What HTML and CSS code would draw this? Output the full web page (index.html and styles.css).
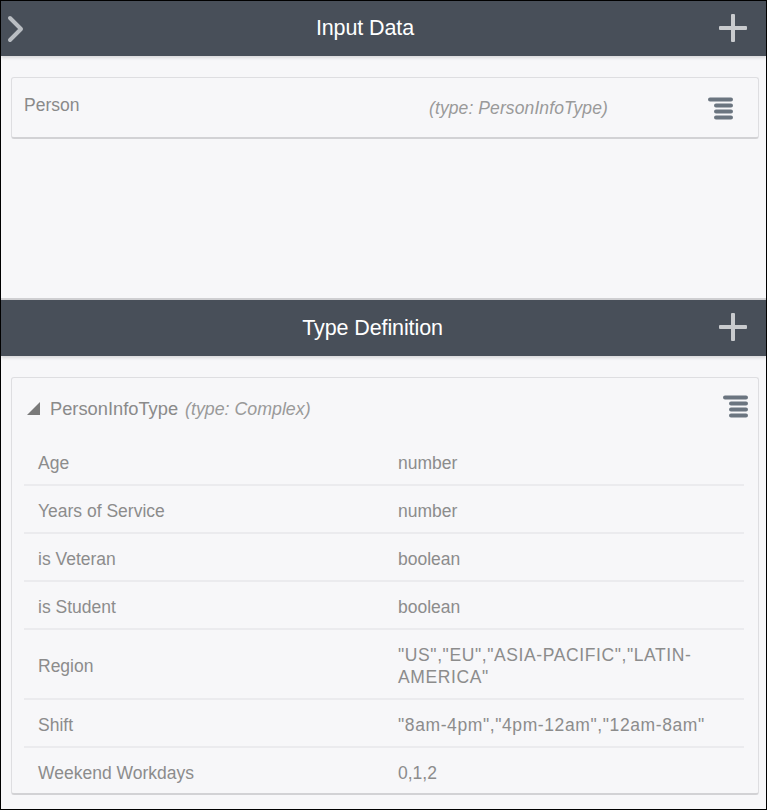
FILE: index.html
```html
<!DOCTYPE html>
<html>
<head>
<meta charset="utf-8">
<link rel="stylesheet" href="styles.css">
</head>
<body>
<div class="frame">
  <section class="panel panel-input">
    <header class="panel-header">
      <svg class="chevron" width="18" height="28" viewBox="0 0 18 28"><polyline points="3,3 14,14 3,25" fill="none" stroke="#b9bdc2" stroke-width="4" stroke-linecap="round" stroke-linejoin="round"/></svg>
      <span class="panel-title">Input Data</span>
      <svg class="plus" width="28" height="28" viewBox="0 0 28 28"><rect x="12" y="0" width="4" height="28" rx="1" fill="#c9cbce"/><rect x="0" y="12" width="28" height="4" rx="1" fill="#c9cbce"/></svg>
    </header>
    <div class="panel-body">
      <div class="card input-card">
        <span class="input-name">Person</span>
        <span class="input-type">(type: PersonInfoType)</span>
        <svg class="menu-icon" width="25" height="23" viewBox="0 0 25 23"><rect x="0" y="0.5" width="25" height="4" rx="2" fill="#6b7580"/><rect x="6" y="6.5" width="19" height="4" rx="2" fill="#6b7580"/><rect x="6" y="12.5" width="19" height="4" rx="2" fill="#6b7580"/><rect x="6" y="18.5" width="19" height="4" rx="2" fill="#6b7580"/></svg>
      </div>
    </div>
  </section>
  <section class="panel panel-types">
    <header class="panel-header">
      <span class="panel-title">Type Definition</span>
      <svg class="plus" width="28" height="28" viewBox="0 0 28 28"><rect x="12" y="0" width="4" height="28" rx="1" fill="#c9cbce"/><rect x="0" y="12" width="28" height="4" rx="1" fill="#c9cbce"/></svg>
    </header>
    <div class="panel-body types-body">
      <div class="card type-card">
        <div class="type-head">
          <svg class="triangle" width="13" height="13" viewBox="0 0 13 13"><polygon points="0,13 13,0 13,13" fill="#7a7a7a"/></svg>
          <span class="type-name">PersonInfoType</span>
          <span class="type-kind">(type: Complex)</span>
          <svg class="menu-icon menu-icon-2" width="25" height="23" viewBox="0 0 25 23"><rect x="0" y="0.5" width="25" height="4" rx="2" fill="#6b7580"/><rect x="6" y="6.5" width="19" height="4" rx="2" fill="#6b7580"/><rect x="6" y="12.5" width="19" height="4" rx="2" fill="#6b7580"/><rect x="6" y="18.5" width="19" height="4" rx="2" fill="#6b7580"/></svg>
        </div>
        <div class="fields">
          <div class="field"><span class="field-name">Age</span><span class="field-value">number</span></div>
          <div class="field"><span class="field-name">Years of Service</span><span class="field-value">number</span></div>
          <div class="field"><span class="field-name">is Veteran</span><span class="field-value">boolean</span></div>
          <div class="field"><span class="field-name">is Student</span><span class="field-value">boolean</span></div>
          <div class="field"><span class="field-name">Region</span><span class="field-value enum">"US","EU","ASIA-PACIFIC","LATIN-AMERICA"</span></div>
          <div class="field"><span class="field-name">Shift</span><span class="field-value enum">"8am-4pm","4pm-12am","12am-8am"</span></div>
          <div class="field last"><span class="field-name">Weekend Workdays</span><span class="field-value">0,1,2</span></div>
        </div>
      </div>
    </div>
  </section>
</div>
</body>
</html>
```

FILE: styles.css
```css
html, body {
  margin: 0;
  padding: 0;
}
body {
  font-family: "Liberation Sans", Arial, sans-serif;
  background: #f7f7f9;
}
.frame {
  width: 767px;
  height: 810px;
  box-sizing: border-box;
  border: 1px solid #000;
  background: #f7f7f9;
  display: flex;
  flex-direction: column;
  overflow: hidden;
}
.panel-header {
  position: relative;
  height: 55px;
  background: #484f59;
  display: flex;
  align-items: center;
  justify-content: center;
  box-shadow: 0 2px 3px rgba(0, 0, 0, 0.12);
  z-index: 1;
  padding-right: 37px;
}
.panel-types .panel-header {
  height: 56px;
  padding-right: 22px;
}
.panel-title {
  color: #ffffff;
  font-size: 21.5px;
  letter-spacing: -0.1px;
}
.chevron {
  position: absolute;
  left: 6px;
  top: 14px;
}
.plus {
  position: absolute;
  right: 19px;
  top: 13px;
}
.panel-body {
  height: 244px;
  box-sizing: border-box;
  padding: 21px 7px 0 10px;
  border-bottom: 2px solid #cfcfd2;
}
.card {
  background: #f7f7f9;
  border: 1px solid #dedee1;
  border-bottom: 2px solid #d2d2d5;
  border-radius: 3px;
  box-sizing: border-box;
}
.input-card {
  height: 62px;
  display: flex;
  align-items: flex-start;
  padding: 16px 25px 0 12px;
  font-size: 17.5px;
  line-height: 22px;
}
.input-name {
  color: #8a8a8a;
  width: 405px;
}
.input-type {
  color: #9a9a9a;
  font-style: italic;
  margin-top: 3px;
  letter-spacing: 0.1px;
}
.input-card .menu-icon {
  margin-left: auto;
  margin-top: 3px;
}
.types-body {
  height: auto;
  border-bottom: none;
  padding-top: 21px;
}
.type-card {
  height: 418px;
}
.type-head {
  display: flex;
  align-items: center;
  height: 60px;
  box-sizing: border-box;
  padding: 1px 10px 0 15px;
  font-size: 18.3px;
  line-height: 22px;
}
.triangle {
  margin-right: 10px;
}
.type-name {
  color: #8a8a8a;
}
.type-kind {
  color: #9a9a9a;
  font-style: italic;
  font-size: 17.8px;
  margin-left: 7px;
}
.menu-icon-2 {
  margin-left: auto;
  margin-top: -5px;
}
.fields {
  margin: 0 14px 0 12px;
}
.field {
  display: flex;
  padding: 14px 0 10px 14px;
  border-bottom: 2px solid #ebebee;
  font-size: 17.5px;
  line-height: 22px;
  color: #8c8c8c;
}
.field.last {
  border-bottom: none;
}
.field-name {
  width: 360px;
  flex-shrink: 0;
  align-self: center;
}
.field-value {
  width: 330px;
}
.field-value.enum {
  letter-spacing: 0.6px;
}
```
